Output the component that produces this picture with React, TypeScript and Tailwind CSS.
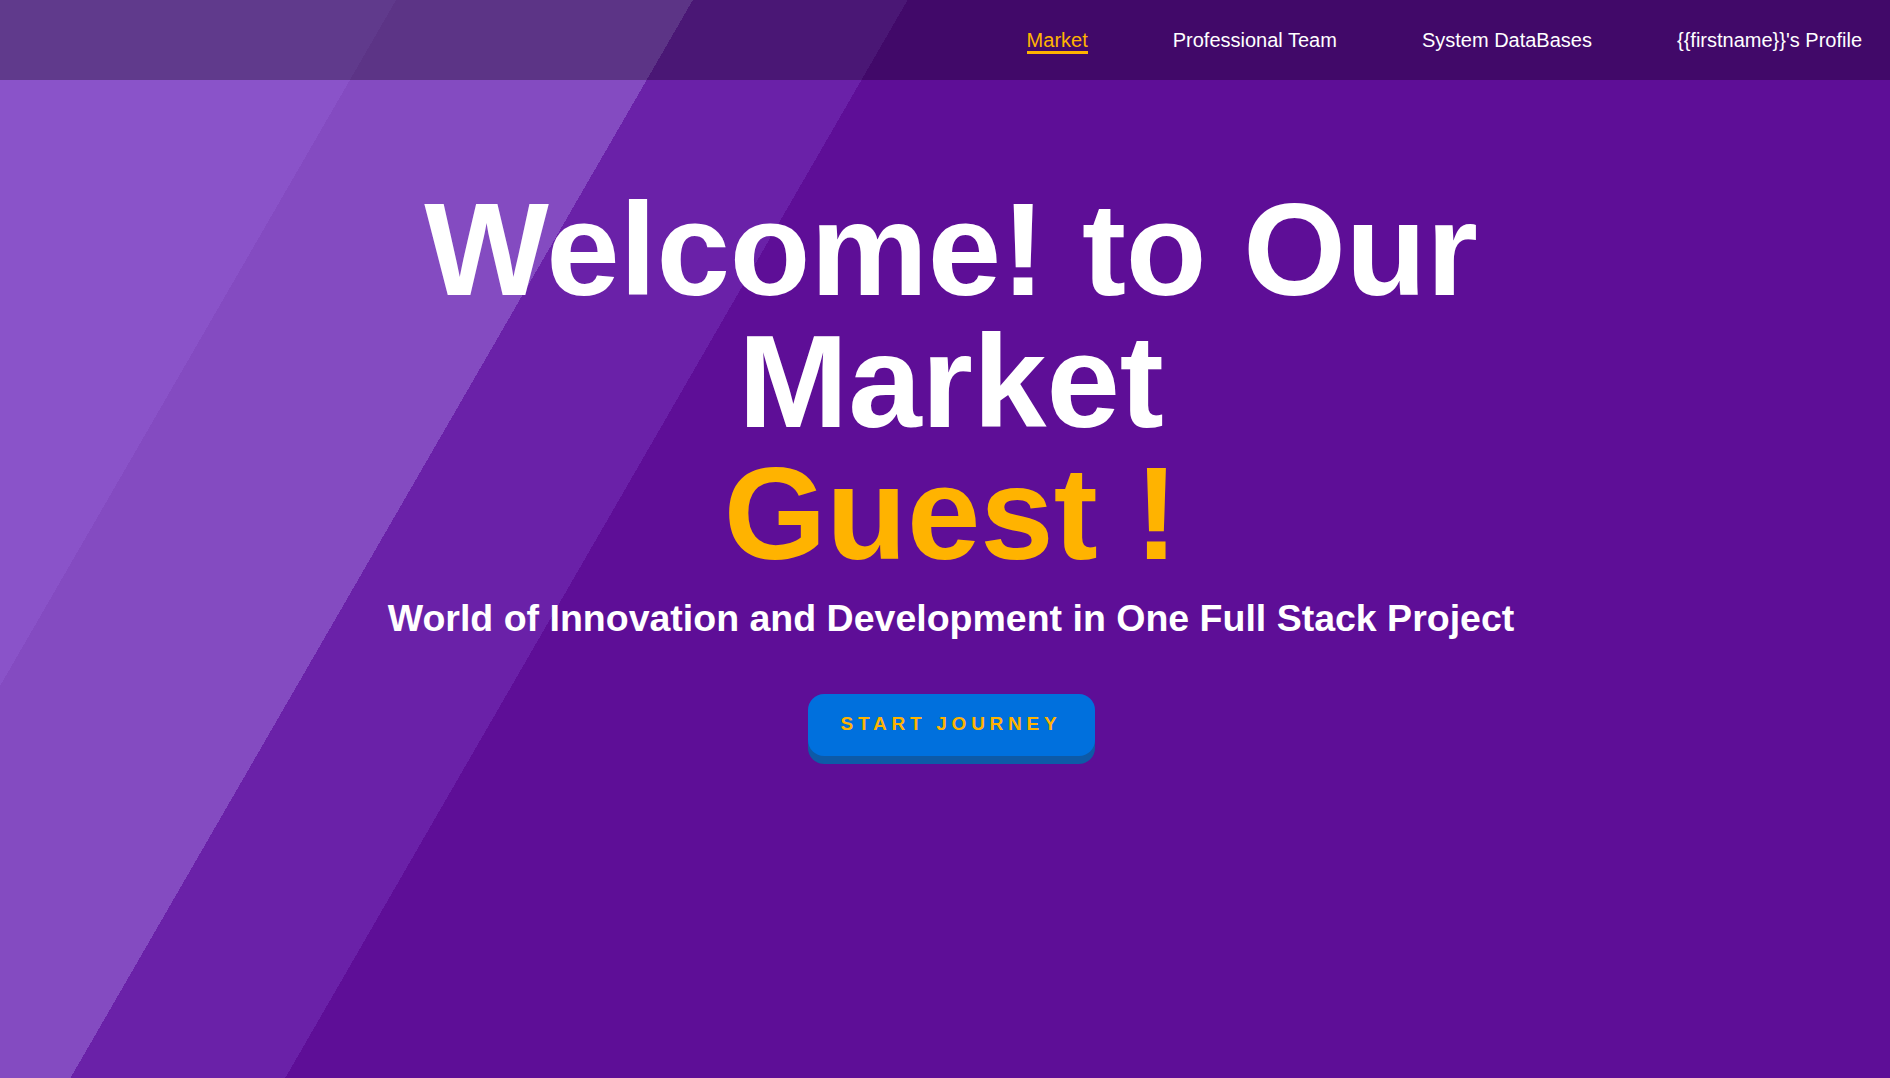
const links = ['Market', 'Professional Team', 'System DataBases', "{{firstname}}'s Profile"]

export default function App() {
  return (
    <div className="h-screen w-full overflow-hidden font-['Liberation_Sans',Arial,sans-serif] bg-[linear-gradient(120deg,#8a53c9_343px,#844bc1_343px,#844bc1_600px,#6a21a8_600px,#6a21a8_786px,#5e0e97_786px)]">
      <nav className="h-[80px] flex justify-end items-start pt-[30px] pr-[28px] gap-[85px] bg-black/30">
        {links.map((l, i) =>
          i === 0 ? (
            <a key={l} href="#" className="text-[20px] leading-none text-[#ffb300] pb-[1px] border-b-[3px] border-[#ffb300]">
              {l}
            </a>
          ) : (
            <a key={l} href="#" className="text-[20px] leading-none text-white">
              {l}
            </a>
          )
        )}
      </nav>

      <main className="flex flex-col items-center pt-[104px] pl-[12px] text-center">
        <h1 className="text-[132px] leading-none font-bold text-white">
          Welcome! to Our
          <br />
          Market
          <br />
          <span className="text-[#ffb300]">Guest !</span>
        </h1>
        <h2 className="mt-[20px] text-[37.5px] leading-none font-bold text-white">
          World of Innovation and Development in One Full Stack Project
        </h2>
        <button className="mt-[56px] w-[287px] h-[62px] rounded-[16px] bg-[#0070dd] shadow-[0_8px_0_#0d5aa7] text-[19px] font-bold tracking-[0.25em] text-[#ffb300]">
          START JOURNEY
        </button>
      </main>
    </div>
  )
}
